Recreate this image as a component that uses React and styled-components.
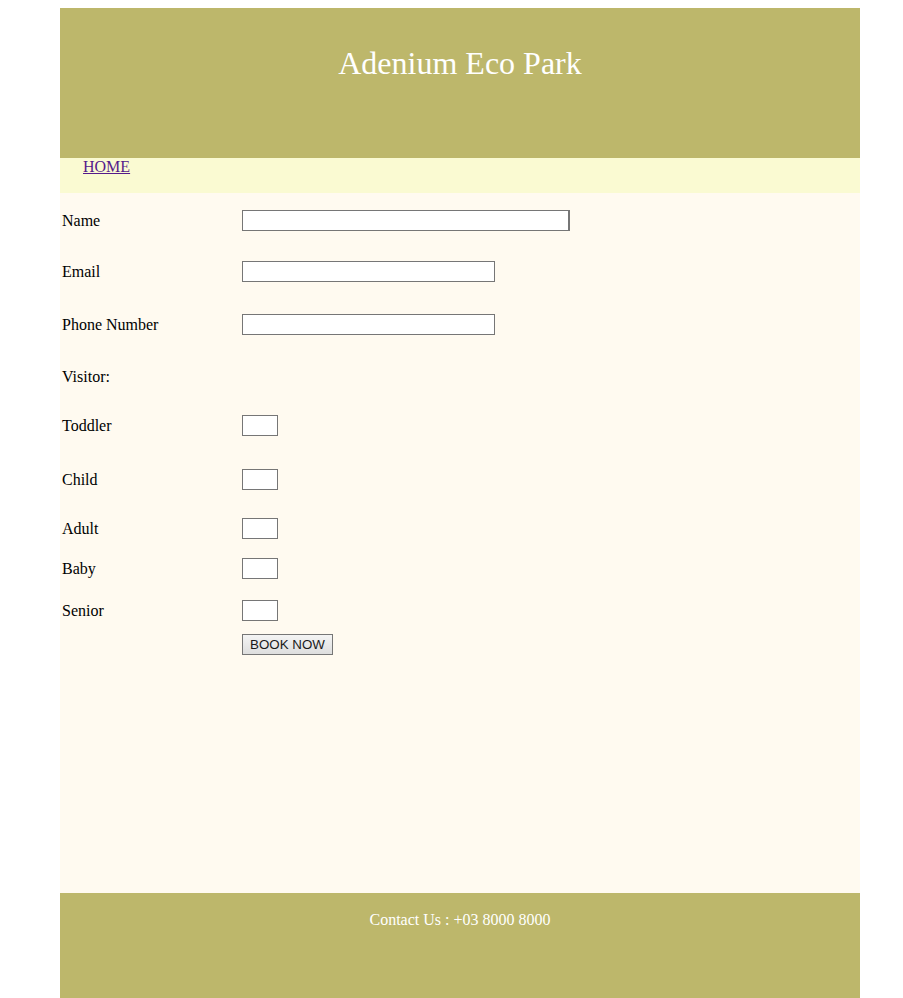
import React from 'react';
import styled, { createGlobalStyle } from 'styled-components';

const GlobalStyle = createGlobalStyle`
  body {
    margin: 8px;
    background: #ffffff;
    font-family: 'Liberation Serif', 'Times New Roman', serif;
    font-size: 16px;
  }
`;

const Page = styled.div`
  width: 800px;
  margin-left: 52px;
`;

const Header = styled.header`
  height: 150px;
  box-sizing: border-box;
  padding-top: 16px;
  background: #bdb76b;
  text-align: center;

  & h1 {
    margin: 21.44px 0 0;
    font-size: 32px;
    font-weight: 400;
    color: #ffffff;
  }
`;

const Nav = styled.nav`
  height: 35px;
  background: #fafad2;
  padding-left: 23px;

  & a {
    color: #551a8b;
    text-decoration: underline;
  }
`;

const Content = styled.main`
  height: 700px;
  box-sizing: border-box;
  padding: 1px 2px 0;
  background: #fffaf0;
`;

const Row = styled.div`
  display: flex;
  align-items: center;
  height: ${props => props.h}px;
`;

const Label = styled.label`
  width: 180px;
  padding-top: 3px;
  color: #000000;
`;

const Field = styled.input`
  box-sizing: border-box;
  width: ${props => props.w}px;
  height: 21px;
  margin: 1px 0 0;
  padding: 1px 2px;
  border: 1px solid #767676;
  border-right-width: ${props => (props.thick ? 2 : 1)}px;
  background: #ffffff;
  font-family: 'Liberation Sans', Arial, sans-serif;
  font-size: 13.33px;
`;

const Button = styled.button`
  box-sizing: border-box;
  width: 91px;
  height: 21px;
  margin: 1px 0 0 180px;
  padding: 0;
  border: 1px solid #767676;
  background: linear-gradient(#f4f4f4, #dedede);
  color: #1a1a1a;
  font-family: 'Liberation Sans', Arial, sans-serif;
  font-size: 13.33px;
`;

const Footer = styled.footer`
  height: 120px;
  box-sizing: border-box;
  padding-top: 18px;
  background: #bdb76b;
  color: #ffffff;
  text-align: center;
`;

const visitors = [
  { name: 'Toddler', h: 51 },
  { name: 'Child', h: 57 },
  { name: 'Adult', h: 41 },
  { name: 'Baby', h: 39 },
  { name: 'Senior', h: 45 },
];

export default function App() {
  return (
    <Page>
      <GlobalStyle />
      <Header>
        <h1>Adenium Eco Park</h1>
      </Header>
      <Nav>
        <a href="#home">HOME</a>
      </Nav>
      <Content>
        <Row h={51}>
          <Label>Name</Label>
          <Field w={328} thick />
        </Row>
        <Row h={51}>
          <Label>Email</Label>
          <Field w={253} />
        </Row>
        <Row h={55}>
          <Label>Phone Number</Label>
          <Field w={253} />
        </Row>
        <Row h={48}>
          <Label>Visitor:</Label>
        </Row>
        {visitors.map(v => (
          <Row key={v.name} h={v.h}>
            <Label>{v.name}</Label>
            <Field w={36} />
          </Row>
        ))}
        <Row h={23}>
          <Button>BOOK NOW</Button>
        </Row>
      </Content>
      <Footer>Contact Us : +03 8000 8000</Footer>
    </Page>
  );
}
